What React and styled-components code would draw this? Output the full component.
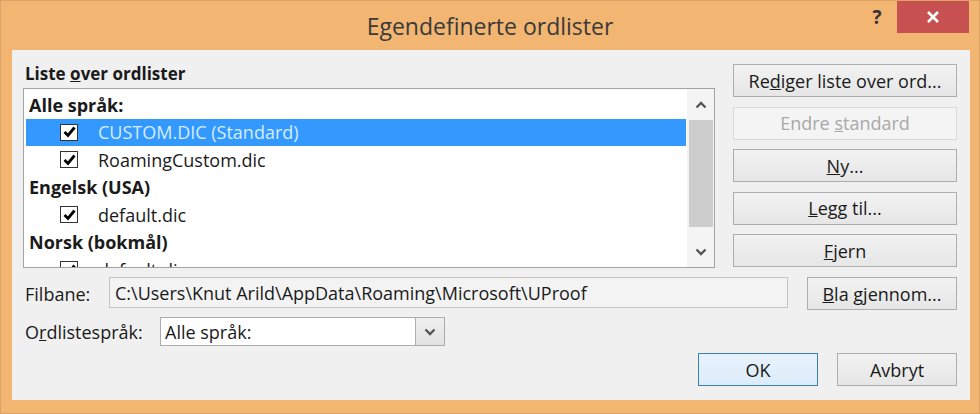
import React from "react";
import styled, { createGlobalStyle } from "styled-components";

const GlobalStyle = createGlobalStyle`
  html, body {
    margin: 0;
    padding: 0;
    background: #f0b470;
  }
  body {
    font-family: "Open Sans", "Noto Sans", "Liberation Sans", sans-serif;
  }
`;

const Frame = styled.div`
  width: 980px;
  height: 414px;
  box-sizing: border-box;
  background: #f2b572;
  border: 1px solid #dca366;
  display: flex;
  flex-direction: column;
  overflow: hidden;
`;

const TitleBar = styled.div`
  height: 49px;
  display: flex;
  align-items: flex-start;
`;

const Title = styled.div`
  flex: 1;
  text-align: center;
  font-size: 23px;
  line-height: 50px;
  color: #3a3a3a;
  padding-left: 122px;
`;

const Help = styled.div`
  width: 40px;
  margin-top: 3px;
  text-align: center;
  font-size: 19px;
  font-weight: 700;
  color: #333;
`;

const CloseButton = styled.div`
  width: 72px;
  height: 32px;
  margin-right: 10px;
  background: #c75050;
  display: flex;
  align-items: center;
  justify-content: center;
`;

const Client = styled.div`
  flex: 1;
  margin: 0 9px 13px 11px;
  background: #f0f0f0;
  padding: 14px 13px 0 11px;
  display: flex;
  flex-direction: column;
  color: #1a1a1a;
  font-size: 18px;
`;

const Top = styled.div`
  display: flex;
  gap: 18px;
`;

const LeftCol = styled.div`
  width: 692px;
  display: flex;
  flex-direction: column;
`;

const RightCol = styled.div`
  width: 224px;
  display: flex;
  flex-direction: column;
  gap: 9.5px;
`;

const GroupLabel = styled.div`
  height: 24px;
  line-height: 20px;
  font-size: 17px;
  font-weight: 700;
  padding-left: 2px;
`;

const ListBox = styled.div`
  height: 180px;
  box-sizing: border-box;
  border: 1px solid #a3a3a3;
  background: #fff;
  display: flex;
  overflow: hidden;
`;

const Items = styled.div`
  flex: 1;
  padding-top: 2px;
  overflow: hidden;
`;

const Row = styled.div`
  height: 27.5px;
  display: flex;
  align-items: center;
  margin: 0 1px 0 2px;
  padding-left: ${(p) => (p.$header ? "3px" : "34px")};
  font-weight: ${(p) => (p.$header ? 700 : 400)};
  background: ${(p) => (p.$selected ? "#3399ff" : "transparent")};
  color: ${(p) => (p.$selected ? "#d6ecff" : "#1a1a1a")};
  white-space: nowrap;
`;

const Check = styled.span`
  width: 18px;
  height: 17px;
  box-sizing: border-box;
  border: 1px solid #333;
  background: #fff;
  margin-right: 20px;
  display: flex;
  align-items: center;
  justify-content: center;
  flex-shrink: 0;
`;

const ScrollBar = styled.div`
  width: 27px;
  background: #f4f4f4;
  display: flex;
  flex-direction: column;
  align-items: center;
`;

const ScrollArrow = styled.div`
  height: 31px;
  display: flex;
  align-items: center;
  justify-content: center;
`;

const Thumb = styled.div`
  width: 24px;
  height: 107px;
  background: #cdcdcd;
`;

const Spacer = styled.div`
  flex: 1;
`;

const Button = styled.div`
  height: 33px;
  width: ${(p) => p.$w || "auto"};
  box-sizing: border-box;
  display: flex;
  align-items: center;
  justify-content: center;
  border: 1px solid ${(p) => (p.$default ? "#3c7fb1" : p.$disabled ? "#d9d9d9" : "#adadad")};
  background: ${(p) =>
    p.$default
      ? "linear-gradient(#e8f2fb, #dcecfa)"
      : p.$disabled
      ? "#f4f4f4"
      : "linear-gradient(#f2f2f2, #e6e6e6)"};
  color: ${(p) => (p.$disabled ? "#a8a8a8" : "#1a1a1a")};
  white-space: nowrap;
  flex-shrink: 0;
`;

const FieldRow = styled.div`
  display: flex;
  align-items: center;
  margin-top: ${(p) => p.$mt || "0"};
`;

const FieldLabel = styled.div`
  width: ${(p) => p.$w};
  padding-left: 2px;
  flex-shrink: 0;
`;

const PathField = styled.div`
  flex: 1;
  height: 31px;
  box-sizing: border-box;
  border: 1px solid #c4c4c4;
  background: #f3f3f3;
  display: flex;
  align-items: center;
  padding-left: 5px;
  margin-right: 19px;
  margin-top: -2px;
  white-space: nowrap;
  overflow: hidden;
`;

const Combo = styled.div`
  width: 285px;
  height: 29px;
  box-sizing: border-box;
  border: 1px solid #acacac;
  background: #fff;
  display: flex;
  align-items: center;
`;

const ComboText = styled.div`
  flex: 1;
  padding-left: 4px;
`;

const ComboButton = styled.div`
  width: 29px;
  height: 100%;
  box-sizing: border-box;
  border-left: 1px solid #acacac;
  background: linear-gradient(#efefef, #e2e2e2);
  display: flex;
  align-items: center;
  justify-content: center;
`;

const Footer = styled.div`
  display: flex;
  justify-content: flex-end;
  gap: 19px;
  margin-top: 7px;
`;

const Chevron = ({ up }) => (
  <svg width="12" height="8" viewBox="0 0 12 8">
    <path
      d={up ? "M1.5 6.5 L6 2 L10.5 6.5" : "M1.5 1.5 L6 6 L10.5 1.5"}
      fill="none"
      stroke="#555"
      strokeWidth="2.4"
    />
  </svg>
);

const Tick = () => (
  <svg width="13" height="12" viewBox="0 0 13 12">
    <path d="M1.5 6 L5 9.5 L11.5 1.5" fill="none" stroke="#000" strokeWidth="2.8" />
  </svg>
);

const rows = [
  { header: true, text: "Alle språk:" },
  { text: "CUSTOM.DIC (Standard)", selected: true },
  { text: "RoamingCustom.dic" },
  { header: true, text: "Engelsk (USA)" },
  { text: "default.dic" },
  { header: true, text: "Norsk (bokmål)" },
  { text: "default.dic" },
];

export default function App() {
  return (
    <>
      <GlobalStyle />
      <Frame>
        <TitleBar>
          <Title>Egendefinerte ordlister</Title>
          <Help>?</Help>
          <CloseButton>
            <svg width="14" height="14" viewBox="0 0 14 14">
              <path d="M2 2 L12 12 M12 2 L2 12" stroke="#fff" strokeWidth="2.6" />
            </svg>
          </CloseButton>
        </TitleBar>
        <Client>
          <Top>
            <LeftCol>
              <GroupLabel>
                Liste <u>o</u>ver ordlister
              </GroupLabel>
              <ListBox>
                <Items>
                  {rows.map((r, i) => (
                    <Row key={i} $header={r.header} $selected={r.selected}>
                      {!r.header && (
                        <Check>
                          <Tick />
                        </Check>
                      )}
                      <span>{r.text}</span>
                    </Row>
                  ))}
                </Items>
                <ScrollBar>
                  <ScrollArrow>
                    <Chevron up />
                  </ScrollArrow>
                  <Thumb />
                  <Spacer />
                  <ScrollArrow>
                    <Chevron />
                  </ScrollArrow>
                </ScrollBar>
              </ListBox>
            </LeftCol>
            <RightCol>
              <Button>
                <span>
                  Re<u>d</u>iger liste over ord...
                </span>
              </Button>
              <Button $disabled>
                <span>
                  Endre <u>s</u>tandard
                </span>
              </Button>
              <Button>
                <span>
                  <u>N</u>y...
                </span>
              </Button>
              <Button>
                <span>
                  <u>L</u>egg til...
                </span>
              </Button>
              <Button>
                <span>
                  <u>F</u>jern
                </span>
              </Button>
            </RightCol>
          </Top>
          <FieldRow $mt="9px">
            <FieldLabel $w="84px">Filbane:</FieldLabel>
            <PathField>C:\Users\Knut Arild\AppData\Roaming\Microsoft\UProof</PathField>
            <Button $w="150px">
              <span>
                <u>B</u>la gjennom...
              </span>
            </Button>
          </FieldRow>
          <FieldRow $mt="7px">
            <FieldLabel $w="135px">
              O<u>r</u>dlistespråk:
            </FieldLabel>
            <Combo>
              <ComboText>Alle språk:</ComboText>
              <ComboButton>
                <Chevron />
              </ComboButton>
            </Combo>
          </FieldRow>
          <Footer>
            <Button $default $w="120px">
              OK
            </Button>
            <Button $w="120px">Avbryt</Button>
          </Footer>
        </Client>
      </Frame>
    </>
  );
}
